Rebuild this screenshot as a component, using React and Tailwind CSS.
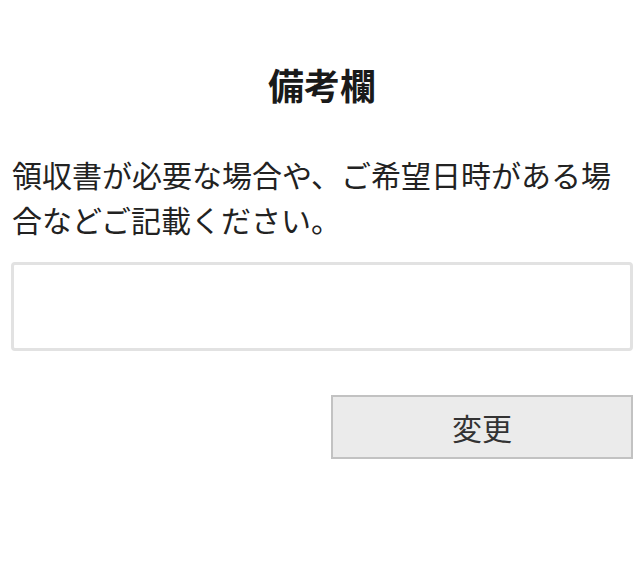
export default function App() {
  return (
    <div
      className="min-h-[584px] bg-white text-[#222]"
      style={{ fontFamily: '"Noto Sans CJK JP", "Noto Sans", sans-serif' }}
    >
      <div className="pl-[11px] pr-[7px] pt-[57px]">
        {/* Heading */}
        <h2 className="text-center text-[36px] leading-[54px] font-bold text-[#1a1a1a]">
          備考欄
        </h2>

        {/* Description */}
        <p className="mt-[41px] pl-[1px] text-[30px] leading-[45px] text-[#222]">
          領収書が必要な場合や、ご希望日時がある場合などご記載ください。
        </p>

        {/* Note input */}
        <textarea
          className="mt-[20px] block w-full h-[89px] border-[3px] border-[#e2e2e2] rounded-[4px] bg-white resize-none outline-none"
          aria-label="備考欄"
        />

        {/* Submit */}
        <div className="flex justify-end mt-[44px]">
          <button className="w-[302px] h-[64px] bg-[#ebebeb] border-2 border-[#c2c2c2] text-[30px] text-[#333] leading-none">
            変更
          </button>
        </div>
      </div>
    </div>
  )
}
